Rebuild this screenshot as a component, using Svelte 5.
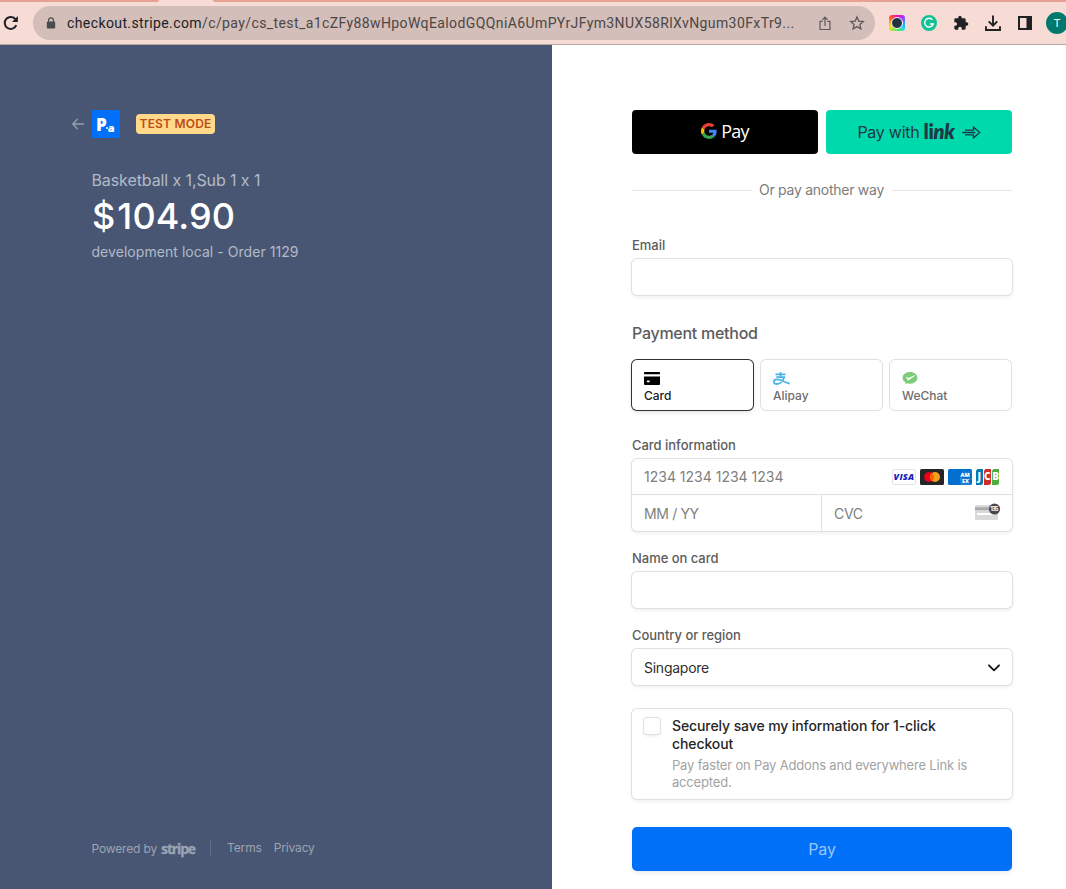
<script>
  let email = $state('');
  let cardName = $state('');
  let selected = $state('card');
  let save = $state(false);

  const methods = [
    { id: 'card', label: 'Card' },
    { id: 'alipay', label: 'Alipay' },
    { id: 'wechat', label: 'WeChat' },
  ];
</script>

<div class="window">
  <div class="toolbar">
    <div class="tab-strip"><span class="tab left"></span><span class="tab right"></span></div>
    <div class="tools">
      <svg class="reload" width="16" height="16" viewBox="0 0 16 16" fill="none" stroke="#202124" stroke-width="2">
        <path d="M13.3 10.2A6 6 0 1 1 12.6 4.4" />
        <path d="M14.9 1v6H9z" fill="#202124" stroke="none" />
      </svg>
      <div class="omnibox">
        <svg class="lock" width="10" height="12" viewBox="0 0 10 12">
          <path d="M2.6 5V3.2a2.4 2.4 0 0 1 4.8 0V5" fill="none" stroke="#4b4c4f" stroke-width="1.2" />
          <rect x=".8" y="4.4" width="8.4" height="7.2" rx="1" fill="#4b4c4f" />
        </svg>
        <span class="url"><b>checkout.stripe.com</b>/c/pay/cs_test_a1cZFy88wHpoWqEalodGQQniA6UmPYrJFym3NUX58RlXvNgum30FxTr9...</span>
        <svg class="share" width="12" height="15" viewBox="0 0 12 15" fill="none" stroke="#5f5a59" stroke-width="1.2">
          <path d="M3.7 5.3H1v8.2h10V5.3H8.3M6 10V1.4M3.4 3.8 6 1.2l2.6 2.6" />
        </svg>
        <svg class="star" width="16" height="16" viewBox="0 0 16 16" fill="none" stroke="#5f5a59" stroke-width="1.3">
          <path d="m8 1.9 1.8 4.2 4.5.4-3.4 3 1 4.4L8 11.6l-3.9 2.3 1-4.4-3.4-3 4.5-.4z" />
        </svg>
      </div>
      <div class="extensions">
        <div class="camera"><i></i></div>
        <svg width="16" height="16" viewBox="0 0 16 16">
          <circle cx="8" cy="8" r="8" fill="#12c196" />
          <path d="M11.4 4.7A4.4 4.4 0 1 0 12.3 9H8.9" fill="none" stroke="#fff" stroke-width="1.4" />
        </svg>
        <svg width="16" height="16" viewBox="0 0 24 24" fill="#202124">
          <path d="M20.5 11H19V7a2 2 0 0 0-2-2h-4V3.5a2.5 2.5 0 0 0-5 0V5H4a2 2 0 0 0-2 2v3.8h1.5a2.7 2.7 0 0 1 0 5.4H2V20a2 2 0 0 0 2 2h3.8v-1.5a2.7 2.7 0 0 1 5.4 0V22H17a2 2 0 0 0 2-2v-4h1.5a2.5 2.5 0 0 0 0-5z" />
        </svg>
        <svg width="16" height="16" viewBox="0 0 16 16" fill="none" stroke="#202124" stroke-width="1.9">
          <path d="M8 .5v10M3.7 6.4 8 10.7l4.3-4.3M1 11.2V15h14v-3.8" />
        </svg>
        <svg width="16" height="16" viewBox="0 0 16 16">
          <path d="M1 1h14v14H1zM3 3v10h6.5V3z" fill="#202124" fill-rule="evenodd" />
        </svg>
        <div class="avatar">T</div>
      </div>
    </div>
  </div>

  <div class="checkout">
    <aside>
      <header>
        <svg class="back" width="12" height="12" viewBox="0 0 12 12" fill="none" stroke="#98a1b2" stroke-width="1.3" stroke-linecap="round" stroke-linejoin="round">
          <path d="M11.5 6H.8M5.3 1.3.8 6l4.5 4.7" />
        </svg>
        <div class="logo">P<i></i><small>a</small></div>
        <span class="badge">TEST MODE</span>
      </header>
      <p class="items">Basketball x 1,Sub 1 x 1</p>
      <h1><span>$</span>104.90</h1>
      <p class="order">development local - Order 1129</p>
      <footer>
        <span class="powered">Powered by</span>
        <b>stripe</b>
        <span class="links"><span>Terms</span><span>Privacy</span></span>
      </footer>
    </aside>

    <main>
      <div class="express">
        <button class="gpay" aria-label="Google Pay">
          <svg width="16" height="16" viewBox="0 0 48 48">
            <path fill="#ea4335" d="M24 9.5c3.54 0 6.71 1.22 9.21 3.6l6.85-6.85C35.9 2.38 30.47 0 24 0 14.62 0 6.51 5.38 2.56 13.22l7.98 6.19C12.43 13.72 17.74 9.5 24 9.5z" />
            <path fill="#4285f4" d="M46.98 24.55c0-1.57-.15-3.09-.38-4.55H24v9.02h12.94c-.58 2.96-2.26 5.48-4.78 7.18l7.73 6c4.51-4.18 7.09-10.36 7.09-17.65z" />
            <path fill="#fbbc05" d="M10.53 28.59c-.48-1.45-.76-2.99-.76-4.59s.27-3.14.76-4.59l-7.98-6.19C.92 16.46 0 20.12 0 24s.92 7.54 2.56 10.78z" />
            <path fill="#34a853" d="M24 48c6.48 0 11.93-2.13 15.89-5.81l-7.73-6c-2.15 1.45-4.92 2.3-8.16 2.3-6.26 0-11.57-4.22-13.47-9.91l-7.98 6.19C6.51 42.62 14.62 48 24 48z" />
          </svg>
          <span>Pay</span>
        </button>
        <button class="linkpay">
          <span>Pay with</span>
          <b>li<i>nk</i></b>
          <svg width="19" height="13" viewBox="0 0 19 13" fill="none" stroke="#1d3944" stroke-width="1.3" stroke-linejoin="round">
            <path d="M3 4.2h8.5V1l6.2 5.5-6.2 5.5V8.8H3M.3 6.5h13" />
          </svg>
        </button>
      </div>

      <div class="divider"><span>Or pay another way</span></div>

      <label class="label" for="email">Email</label>
      <input id="email" class="field" bind:value={email} />

      <h2>Payment method</h2>
      <div class="methods">
        {#each methods as method}
          <button class="method" class:active={selected === method.id} onclick={() => (selected = method.id)}>
            {#if method.id === 'card'}
              <svg width="16" height="13" viewBox="0 0 16 13">
                <path d="M1 0h14a1 1 0 0 1 1 1v1.3H0V1a1 1 0 0 1 1-1zM0 4.5h16V12a1 1 0 0 1-1 1H1a1 1 0 0 1-1-1z" fill="#000" />
                <rect x="2.8" y="8.5" width="3" height="1.7" rx=".8" fill="#fff" />
              </svg>
            {:else if method.id === 'alipay'}
              <svg width="17" height="13" viewBox="0 0 17 13" fill="none" stroke="#4ab3e8" stroke-width="1.8">
                <path d="M2.5 2.4h10M3.3 5.2h8.9M7.5 0v5M11.3 5C9.8 9.2 7 12 3.9 12 1.6 12 .9 11 .9 9.9c0-1.6 1.3-2.5 3.2-2.5 3.5 0 6.6 2.5 12.6 4.3" />
              </svg>
            {:else}
              <svg width="16" height="14" viewBox="0 0 16 14">
                <path d="M8 0c4.4 0 8 2.8 8 6.3s-3.6 6.3-8 6.3c-1 0-1.9-.1-2.7-.4L3 13.5l.4-2.2C1.3 10.2 0 8.4 0 6.3 0 2.8 3.6 0 8 0z" fill="#7bcb79" />
                <path d="m4.2 5.6 1.9 1.3 6.9-3L6 8.9z" fill="#fff" stroke="#fff" stroke-width=".8" />
              </svg>
            {/if}
            <span>{method.label}</span>
          </button>
        {/each}
      </div>

      <label class="label card-label" for="number">Card information</label>
      <div class="card-box">
        <div class="card-row">
          <input id="number" placeholder="1234 1234 1234 1234" />
          <div class="brands">
            <svg width="24" height="16" viewBox="0 0 24 16">
              <rect x=".5" y=".5" width="23" height="15" rx="1" fill="#fff" stroke="#e4e4e8" />
              <text x="1.6" y="11.4" class="visa" textLength="20.5">VISA</text>
            </svg>
            <svg width="24" height="16" viewBox="0 0 24 16">
              <rect width="24" height="16" rx="1.5" fill="#252525" />
              <circle cx="9" cy="8" r="5" fill="#eb001b" />
              <circle cx="15" cy="8" r="5" fill="#f79e1b" />
              <path d="M12 4a5 5 0 0 1 0 8 5 5 0 0 1 0-8z" fill="#ff5f00" />
            </svg>
            <svg width="24" height="16" viewBox="0 0 24 16">
              <rect width="24" height="16" rx="1.5" fill="#016fd0" />
              <path d="M12 8.5 15 3h3l1 2 1-2h4M12 10h12M13 8.5V15h11" fill="none" stroke="#fff" stroke-opacity=".35" stroke-width=".6" />
              <text class="amex"><tspan x="12.5" y="8">AM</tspan><tspan x="14" y="14">EX</tspan></text>
            </svg>
            <svg width="24" height="16" viewBox="0 0 24 16">
              <path d="M2.5 0H7v13.5A2.5 2.5 0 0 1 4.5 16H0V2.5A2.5 2.5 0 0 1 2.5 0z" fill="#047ab1" />
              <path d="M10.5 0H15v13.5a2.5 2.5 0 0 1-2.5 2.5H8V2.5A2.5 2.5 0 0 1 10.5 0z" fill="#d42d27" />
              <path d="M18.5 0H23v13.5a2.5 2.5 0 0 1-2.5 2.5H16V2.5A2.5 2.5 0 0 1 18.5 0z" fill="#4fac40" />
              <text y="11.3" class="jcb"><tspan x="1.4">J</tspan><tspan x="8">C</tspan><tspan x="16.2">B</tspan></text>
            </svg>
          </div>
        </div>
        <div class="card-row split">
          <div class="cell"><input placeholder="MM / YY" aria-label="Expiry" /></div>
          <div class="cell">
            <input placeholder="CVC" aria-label="CVC" />
            <svg class="cvc" width="26" height="18" viewBox="0 0 26 18">
              <rect y="2" width="23" height="15" rx="1.5" fill="#d9d9d9" />
              <rect y="4.3" width="23" height="2.8" fill="#a9a9a9" />
              <rect x="2" y="10" width="17" height="2" fill="#fff" />
              <circle cx="19.5" cy="6" r="5.6" fill="#484848" />
              <text x="15.3" y="8.2" class="digits" textLength="8.4">135</text>
            </svg>
          </div>
        </div>
      </div>

      <label class="label name-label" for="name">Name on card</label>
      <input id="name" class="field" bind:value={cardName} />

      <label class="label name-label" for="country">Country or region</label>
      <div id="country" class="field select">
        <span>Singapore</span>
        <svg width="12" height="8" viewBox="0 0 12 8" fill="none" stroke="#111" stroke-width="1.8" stroke-linecap="round" stroke-linejoin="round">
          <path d="m1 1.300 5 5 5-5" />
        </svg>
      </div>

      <label class="save">
        <input type="checkbox" bind:checked={save} />
        <span>
          <strong>Securely save my information for 1-click checkout</strong>
          <small>Pay faster on Pay Addons and everywhere Link is accepted.</small>
        </span>
      </label>

      <button class="pay">Pay</button>
    </main>
  </div>
</div>

<style>
  :global(body) { margin: 0; overflow: hidden; }
  .window { width: 1066px; height: 889px; display: flex; flex-direction: column; overflow: hidden; font-family: Inter, "Liberation Sans", sans-serif; background: #fff; }
  .window * { box-sizing: border-box; }
  button, input { font: inherit; border: 0; padding: 0; margin: 0; background: none; }
  p, h1, h2 { margin: 0; }
  svg { display: block; flex: none; }

  .toolbar { height: 45px; flex: none; background: #f6dcd4; border-bottom: 1px solid #b7a7a4; display: flex; flex-direction: column; }
  .tab-strip { height: 2px; display: flex; justify-content: space-between; }
  .tab { background: #e6a192; height: 2px; }
  .tab.left { width: 159px; border-bottom-right-radius: 2px; }
  .tab.right { width: 853px; border-bottom-left-radius: 2px; }
  .tools { flex: 1; display: flex; align-items: center; padding-left: 3px; }
  .omnibox { width: 842px; height: 34px; margin-left: 14px; border-radius: 17px; background: #d3beb9; display: flex; align-items: center; padding-left: 13px; flex: none; }
  .url { width: 738px; margin-left: 11px; font: 14px/20px Roboto, sans-serif; letter-spacing: 0.4px; white-space: nowrap; color: #4c4746; }
  .url b { font-weight: 400; color: #202124; }
  .share { margin-left: 14px; }
  .star { margin-left: 18px; }
  .extensions { margin-left: 14px; display: flex; align-items: center; gap: 16px; flex: none; }
  .camera { width: 16px; height: 16px; border-radius: 3px; background: conic-gradient(#f0a, #a3f 12%, #39f 25%, #2dd 37%, #5e5 50%, #fd2 68%, #f62 85%, #f0a); display: flex; align-items: center; justify-content: center; }
  .camera i { width: 12px; height: 12px; border: 1.5px solid #fff; border-radius: 50%; background: #223344; }
  .avatar { width: 22px; height: 22px; margin-left: -3px; border-radius: 50%; background: #00796b; color: #fff; font-size: 11px; line-height: 22px; text-align: center; }

  .checkout { flex: 1; display: flex; min-height: 0; }
  aside { width: 552px; padding: 65px 0 30px 72px; background: #485673; color: #b3bac7; display: flex; flex-direction: column; }
  header { display: flex; align-items: center; height: 28px; }
  .logo { width: 28px; height: 28px; margin-left: 8px; background: #0070f8; color: #fff; font: 800 17px/30px "Open Sans", sans-serif; padding-left: 4px; white-space: nowrap; display: flex; }
  .logo small { font-size: 11px; line-height: 35px; }
  .logo i { width: 2px; height: 2px; margin: 17px 0 0 -1px; border-radius: 50%; background: #fff; }
  .badge { height: 20px; margin-left: 16px; width: 79px; border-radius: 4px; background: #ffd98c; color: #bd4c16; font-size: 12px; font-weight: 600; line-height: 20px; text-align: center; letter-spacing: 0.2px; white-space: nowrap; }
  .items { margin: 32px 0 0 19.5px; font-size: 16px; line-height: 20px; letter-spacing: -0.1px; }
  h1 { margin: 4px 0 0 20px; font-size: 36px; line-height: 44px; font-weight: 550; color: #fff; letter-spacing: 0.1px; }
  h1 span { margin-right: 2px; }
  .order { margin: 4px 0 0 19.5px; font-size: 14px; line-height: 20px; letter-spacing: 0.05px; }
  footer { margin: auto 0 0 19.5px; height: 20px; display: flex; align-items: center; font-size: 12px; letter-spacing: -0.15px; color: #9ba4b4; }
  footer span { margin-top: -2px; }
  footer b { width: 33px; margin-left: 4px; font: 700 14px/20px "Open Sans", sans-serif; letter-spacing: -1.15px; -webkit-text-stroke: 0.3px #9ba4b4; }
  .links { margin-left: 16px; padding-left: 16px; line-height: 18px; border-left: 1px solid #5e6b84; display: flex; gap: 12px; }
  .links span { margin-top: 0; }

  main { width: 460px; padding: 65px 0 0 80px; display: flex; flex-direction: column; align-items: stretch; color: #30313d; }
  .express { display: flex; gap: 8px; }
  .express button { width: 186px; height: 44px; border-radius: 4px; display: flex; align-items: center; justify-content: center; }
  .gpay { background: #000; color: #fff; }
  .gpay svg { margin-top: -2px; }
  .gpay span { margin: -3px 0 0 4px; font: 18px/24px "Open Sans", sans-serif; letter-spacing: -0.8px; }
  .linkpay { background: #00d9ac; color: #1d3944; font-size: 16px; letter-spacing: -0.25px; }
  .linkpay b { margin: -2px 0 0 4px; font: 800 20px/24px Lato, sans-serif; }
  .linkpay svg { margin-left: 7px; }
  .divider { margin-top: 26px; height: 20px; display: flex; align-items: center; font-size: 14px; letter-spacing: -0.27px; color: #7c7c7c; }
  .divider::before, .divider::after { content: ''; flex: 1; height: 1px; background: #e6e6e6; }
  .divider span { margin: -2px 8px 0 7px; }
  .label { margin-top: 37px; font-size: 13px; line-height: 16px; font-weight: 500; color: #5c5c5c; letter-spacing: -0.03px; }
  .field, .card-box, .save { border-radius: 5px; background: #fff; box-shadow: 0 0 0 1px #e0e0e0, 0 2px 4px rgba(0, 0, 0, 0.08); }
  .field { height: 36px; margin-top: 6px; padding: 0 12px; }
  h2 { margin-top: 28px; font-size: 16px; line-height: 20px; font-weight: 500; color: #5c5c5c; letter-spacing: -0.27px; }
  .methods { margin-top: 17px; display: flex; gap: 8px; }
  .method { width: 121px; height: 50px; padding: 12px 12px 0; border-radius: 5px; box-shadow: 0 0 0 1px #e0e0e0; color: #6d6d6d; font-size: 12px; font-weight: 500; display: flex; flex-direction: column; align-items: flex-start; }
  .method svg { height: 13px; }
  .method span { margin-top: 3px; line-height: 16px; }
  .method.active { color: #1a1a1a; box-shadow: 0 0 0 1px #333, 0 2px 4px rgba(0, 0, 0, 0.15); }

  .card-label { margin-top: 27px; }
  .card-box { height: 72px; margin-top: 6px; }
  .card-row { height: 35px; display: flex; align-items: center; padding: 0 12px; }
  .card-row input { flex: 1; min-width: 0; font-size: 14px; }
  input::placeholder { color: #808080; opacity: 1; }
  .brands { display: flex; gap: 4px; margin-top: 1px; }
  .split { height: 37px; padding: 0; border-top: 1px solid #e0e0e0; }
  .cell { width: 189px; align-self: stretch; display: flex; align-items: center; padding: 0 12px; }
  .cell input { letter-spacing: -0.35px; }
  .cell + .cell { width: 191px; border-left: 1px solid #e0e0e0; }
  .cvc { margin-top: -3px; margin-right: -1px; }
  .visa { font: italic 800 9px "Open Sans", sans-serif; fill: #171fbe; }
  .amex { font: 800 5.5px "Open Sans", sans-serif; fill: #fff; }
  .jcb { font: 800 10px "Open Sans", sans-serif; fill: #fff; }
  .digits { font: 700 6px Inter, sans-serif; fill: #fff; }
  .name-label { margin-top: 19px; }
  .select { display: flex; align-items: center; justify-content: space-between; font-size: 14px; color: #303030; letter-spacing: -0.25px; }
  .select svg { margin-top: 2px; }

  .save { margin-top: 24px; height: 90px; padding: 8px 12px; display: flex; }
  .save input { appearance: none; flex: none; width: 16px; height: 16px; margin-top: 1px; border-radius: 3px; box-shadow: 0 0 0 1px #e0e0e0, 0 2px 3px rgba(0, 0, 0, 0.08); }
  .save > span { margin-left: 12px; }
  .save strong { display: block; font-size: 14px; line-height: 18px; font-weight: 500; color: #262626; letter-spacing: -0.1px; }
  .save small { display: block; margin-top: 4px; font-size: 13px; line-height: 17px; color: #a3a3a3; letter-spacing: -0.18px; }
  .pay { flex: none; height: 44px; margin-top: 28px; border-radius: 5px; background: #0070f8; color: #99c6fc; font-size: 16px; letter-spacing: -0.2px; box-shadow: inset 0 0 0 1px rgba(50, 50, 93, 0.03), 0 2px 4px rgba(0, 0, 0, 0.08); }
</style>
